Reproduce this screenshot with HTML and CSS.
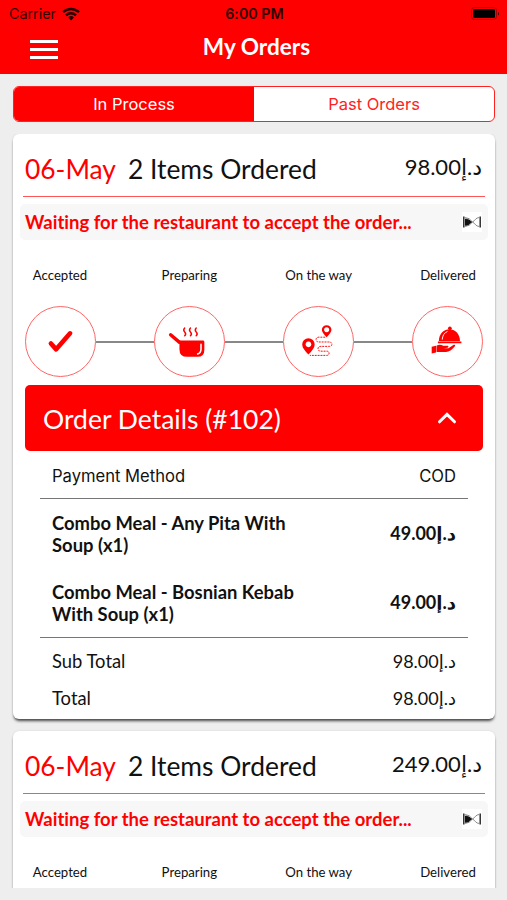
FILE: index.html
```
<!DOCTYPE html>
<html lang="en">
<head>
<meta charset="UTF-8">
<meta name="viewport" content="width=device-width, initial-scale=1">
<title>My Orders</title>
<link rel="stylesheet" href="styles.css">
</head>
<body>
  <header class="header">
    <div class="status-bar">
      <div class="carrier">
        <span>Carrier</span>
        <svg class="wifi" viewBox="0 0 18 14">
          <path d="M1 5.2a11.6 11.6 0 0 1 16 0" />
          <path d="M4 8.3a7.3 7.3 0 0 1 10 0" />
          <path class="dot" d="M9 13.6l-3-3.1a4.3 4.3 0 0 1 6 0z" />
        </svg>
      </div>
      <span class="time">6:00 PM</span>
      <svg class="battery" viewBox="0 0 29 13">
        <rect class="battery-case" x=".5" y=".5" width="25" height="12" rx="3" />
        <rect x="2" y="2" width="22" height="9" rx="1.5" />
        <path d="M27 4.5q1.6 2 0 4z" />
      </svg>
    </div>
    <div class="nav">
      <button class="menu" aria-label="Menu"><span></span><span></span><span></span></button>
      <h1>My Orders</h1>
    </div>
  </header>

  <div class="tabs">
    <button class="tab active">In Process</button>
    <button class="tab">Past Orders</button>
  </div>

  <!-- Icons used by the order cards -->
  <svg class="sprite">
    <symbol id="hourglass" viewBox="0 0 20 20">
      <path d="M1.8 4.5v11M18.2 4.5v11" stroke="#222" stroke-width="1.4" />
      <path d="M3.500 7c3 0 4 2 6.500 3-2.500 1.500-3.500 3.500-6.500 3.500z" fill="#111" stroke="#111" />
      <path d="M17.500 5.500c-4 0-4 3-7 4.500 3 1.500 3 4.500 7 4.500" fill="none" stroke="#888" stroke-width="1" />
      <path d="M2.500 5.500q5 0 8 4.500-3 4.500-8 4.500" fill="none" stroke="#888" stroke-width="1" />
    </symbol>
    <symbol id="check" viewBox="0 0 72 72">
      <path d="M26 38l5.500 6.200 14.500-16.700" fill="none" stroke="#f00" stroke-width="4.800" stroke-linecap="round" stroke-linejoin="round" />
    </symbol>
    <symbol id="pot" viewBox="0 0 72 72">
      <path d="M16.300 29l9 7.600" stroke="#f00" stroke-width="3.600" stroke-linecap="round" />
      <path d="M24.500 35h25.500q1.500 0 1.500 1.500v8q0 7.500-7 7.500h-11q-8 0-8-8v-5z" fill="#f00" />
      <path d="M48 39v4.500q0 4.500-3.500 5.500" fill="none" stroke="#fff" stroke-width="1.600" stroke-linecap="round" />
      <path d="M31 22q-2 2 0 4t0 4M37 22q-2 2 0 4t0 4M43 22q-2 2 0 4t0 4" fill="none" stroke="#f00" stroke-width="1.500" stroke-linecap="round" />
    </symbol>
    <symbol id="route" viewBox="0 0 72 72">
      <path fill="#f00" fill-rule="evenodd" d="M25.500 49.500q-6.500-6.500-6.500-10.500a6.500 6.500 0 0 1 13 0q0 4-6.500 10.500zM25.500 36a3 3 0 1 0 .01 0z" />
      <path fill="#f00" fill-rule="evenodd" d="M44.500 31.500q-5-5-5-7.500a5 5 0 0 1 10 0q0 2.500-5 7.500zM44.500 21a2.700 2.700 0 1 0 .01 0z" />
      <path d="M43 31.500h-6.500q-3 0-3 2.500t3 2.500h10q3.500 0 3.500 2.300t-3.500 2.300h-8q-3 0-3 2.500t3 2.500h6q2.500 0 2.500 2.200t-2.500 2.200H27" fill="none" stroke="#f00" stroke-width="1" stroke-dasharray="2 1" />
    </symbol>
    <symbol id="serve" viewBox="0 0 72 72">
      <circle cx="38.500" cy="22.300" r="1.900" fill="#f00" />
      <path d="M27 35.500c0-16.500 22-16.500 22 0z" fill="#f00" />
      <path d="M26 36.800h24.500" stroke="#f00" stroke-width="1.800" />
      <path d="M30.500 34q.5-6.500 5.500-8.500" fill="none" stroke="#fff" stroke-width="1" />
      <path d="M19.500 41.500l4.500-1v7l-4.500 1z" fill="#f00" />
      <path d="M24.500 40.500q3.500-2 7 0h5q1.500 1.200-.5 2l-4 .5h5l5.500-3.500q2-.3 1.500 1.200-5 6-9.500 6.300h-10z" fill="#f00" />
    </symbol>
  </svg>

  <main class="orders">
    <section class="card">
      <div class="card-head">
        <span class="date">06-May</span>
        <span class="items">2 Items Ordered</span>
        <span class="price">د.إ98.00</span>
      </div>
      <div class="notice">
        <span>Waiting for the restaurant to accept the order...</span>
        <svg class="hourglass"><use href="#hourglass" /></svg>
      </div>
      <div class="labels">
        <span>Accepted</span><span>Preparing</span><span>On the way</span><span>Delivered</span>
      </div>
      <div class="steps">
        <svg class="step"><use href="#check" /></svg>
        <i class="line"></i>
        <svg class="step"><use href="#pot" /></svg>
        <i class="line"></i>
        <svg class="step"><use href="#route" /></svg>
        <i class="line"></i>
        <svg class="step"><use href="#serve" /></svg>
      </div>
      <div class="details-head">
        <h2>Order Details (#102)</h2>
        <svg class="chevron" viewBox="0 0 20 14"><path d="M2.500 10.800L10 3.400l7.500 7.400" /></svg>
      </div>
      <div class="details">
        <div class="row payment"><span>Payment Method</span><span>COD</span></div>
        <div class="products">
          <div class="row product"><span class="name">Combo Meal - Any Pita With Soup (x1)</span><span class="price">د.إ49.00</span></div>
          <div class="row product"><span class="name">Combo Meal - Bosnian Kebab With Soup (x1)</span><span class="price">د.إ49.00</span></div>
        </div>
        <div class="row total"><span>Sub Total</span><span class="price">د.إ98.00</span></div>
        <div class="row total"><span>Total</span><span class="price">د.إ98.00</span></div>
      </div>
    </section>

    <section class="card">
      <div class="card-head">
        <span class="date">06-May</span>
        <span class="items">2 Items Ordered</span>
        <span class="price">د.إ249.00</span>
      </div>
      <div class="notice">
        <span>Waiting for the restaurant to accept the order...</span>
        <svg class="hourglass"><use href="#hourglass" /></svg>
      </div>
      <div class="labels">
        <span>Accepted</span><span>Preparing</span><span>On the way</span><span>Delivered</span>
      </div>
      <div class="steps">
        <svg class="step"><use href="#check" /></svg>
        <i class="line"></i>
        <svg class="step"><use href="#pot" /></svg>
        <i class="line"></i>
        <svg class="step"><use href="#route" /></svg>
        <i class="line"></i>
        <svg class="step"><use href="#serve" /></svg>
      </div>
    </section>
  </main>
</body>
</html>
```
FILE: styles.css
```
* {
  box-sizing: border-box;
}
body {
  margin: 0;
  height: 900px;
  padding-bottom: 12px;
  display: flex;
  flex-direction: column;
  overflow: hidden;
  background: #eee;
  color: #111;
  font-family: Lato, "DejaVu Sans", sans-serif;
  font-variant-ligatures: none;
}
h1, h2 {
  margin: 0;
}
button {
  border: none;
  background: none;
  padding: 0;
  font: inherit;
}
.header {
  flex: none;
  height: 74px;
  background: #f00;
}
.status-bar {
  height: 27px;
  padding: 0 7px 0 9px;
  display: grid;
  grid-template-columns: 1fr auto 1fr;
  align-items: center;
  font-family: Inter, sans-serif;
  font-size: 14.3px;
  color: #300;
}
.carrier {
  display: flex;
  align-items: center;
  gap: 6px;
}
.wifi {
  width: 18px;
  height: 14px;
  fill: none;
  stroke: #200;
  stroke-width: 2.4;
}
.wifi .dot {
  fill: #200;
  stroke: none;
}
.time {
  font-weight: 600;
}
.battery {
  width: 29px;
  height: 13px;
  justify-self: end;
}
.battery-case {
  fill: none;
  stroke: #a00;
}
.nav {
  height: 40px;
  padding: 0 24px 0 30px;
  display: grid;
  grid-template-columns: 28px 1fr 28px;
  align-items: center;
}
.nav h1 {
  padding-bottom: 2px;
  text-align: center;
  color: #fff;
  font-size: 22.6px;
  font-weight: 700;
}
.menu {
  display: flex;
  flex-direction: column;
  gap: 5px;
  padding-top: 5px;
}
.menu span {
  height: 3px;
  background: #fff;
}
.tabs {
  flex: none;
  margin: 12px 12px 0 13px;
  height: 36px;
  display: flex;
  border: 1px solid #f22;
  border-radius: 6px;
  overflow: hidden;
  background: #fff;
}
.tab {
  flex: 1;
  color: #f22;
  font-family: Inter, sans-serif;
  font-size: 16.5px;
}
.tab.active {
  background: #f00;
  color: #fff;
}
.sprite {
  display: none;
}
.orders {
  flex: 1;
  min-height: 0;
  margin-top: 12px;
  padding: 0 12px 0 13px;
  overflow: hidden;
}
.card {
  background: #fff;
  border-radius: 6px;
  margin-bottom: 12px;
  padding: 0 12px;
  box-shadow: 0 3px 3px -1px rgba(0, 0, 0, 0.7), 0 0 2px rgba(0, 0, 0, 0.12);
}
.card-head {
  height: 63px;
  margin: 0 -2px;
  padding: 7px 3px 0 2px;
  display: flex;
  align-items: center;
  font-size: 26.4px;
  border-bottom: 1px solid #f55;
}
.date {
  color: #f00;
  margin-right: 12px;
}
.card-head .price {
  margin-left: auto;
  padding-bottom: 5px;
  font-size: 22px;
}
.notice {
  height: 36px;
  margin: 7px -5px 0;
  padding: 0 6px 0 5px;
  display: flex;
  align-items: center;
  justify-content: space-between;
  background: #f7f7f7;
  border-radius: 5px;
  color: #f00;
  font-size: 18.5px;
  font-weight: 700;
}
.notice span {
  padding-bottom: 1px;
}
.hourglass {
  width: 20px;
  height: 20px;
  background: #fff;
}
.labels {
  height: 66px;
  padding-top: 27px;
  display: flex;
  justify-content: space-between;
  font-size: 13.2px;
  line-height: 17px;
}
.labels span {
  width: 70px;
  text-align: center;
}
.steps {
  display: flex;
  align-items: center;
}
.step {
  flex: none;
  width: 71px;
  height: 71px;
  border: 1px solid #f66;
  border-radius: 50%;
}
.line {
  flex: 1;
  height: 2px;
  background: #888;
}
.details-head {
  height: 66px;
  margin-top: 8px;
  padding: 1px 26px 0 18px;
  display: flex;
  align-items: center;
  justify-content: space-between;
  background: #f00;
  border-radius: 5px;
  color: #fff;
}
.details-head h2 {
  font-size: 26.5px;
  font-weight: 400;
}
.chevron {
  width: 20px;
  height: 14px;
  margin-bottom: 2px;
  fill: none;
  stroke: #fff;
  stroke-width: 3;
  stroke-linecap: round;
}
.details {
  margin: 0 15px;
  padding-bottom: 3px;
}
.row {
  padding: 0 12px;
  display: flex;
  align-items: center;
  justify-content: space-between;
}
.payment {
  height: 48px;
  padding-top: 3px;
  border-bottom: 1px solid #777;
  font-family: Inter, sans-serif;
  font-size: 16.6px;
}
.products {
  border-bottom: 1px solid #777;
}
.product {
  height: 69px;
  font-size: 18px;
  line-height: 22px;
  font-weight: 700;
}
.product .name {
  width: 250px;
  font-size: 18.4px;
}
.product .price {
  padding-bottom: 2px;
}
.total {
  height: 37px;
  font-size: 18.4px;
}
.total .price {
  font-size: 18px;
}
.total:nth-last-child(2) {
  margin-top: 4px;
}
```
